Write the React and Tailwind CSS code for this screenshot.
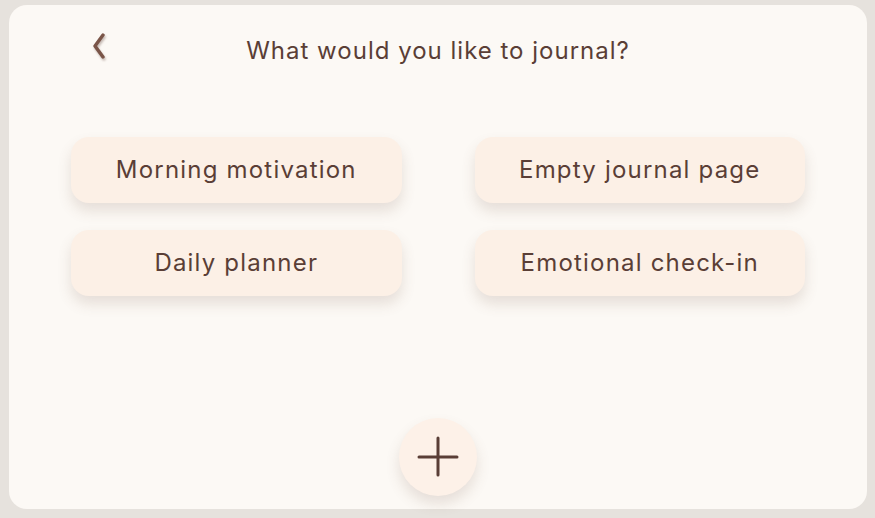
import React from 'react';

const options = ['Morning motivation', 'Empty journal page', 'Daily planner', 'Emotional check-in'];

const App = () => {
  return (
    <div className="w-[875px] h-[518px] bg-[#e6e2dd] pt-[5px] pl-[9px] pr-[8px] pb-[9px]" style={{ fontFamily: 'Inter, "Noto Sans", sans-serif' }}>
      <div className="h-full bg-[#fcf9f5] rounded-[18px] flex flex-col">
        {/* Header */}
        <div className="relative h-[90px] flex items-start justify-center pt-[28px]">
          <button className="absolute left-[80px] top-[25px] text-[#7a5548] drop-shadow-[1px_2px_1px_rgba(90,60,50,0.35)]">
            <svg width="20" height="32" viewBox="0 0 20 32" fill="none">
              <path d="M14 5 L6 16 L14 27" stroke="currentColor" strokeWidth="3.4" strokeLinecap="round" strokeLinejoin="round" />
            </svg>
          </button>
          <h1 className="text-[24px] leading-[36px] text-[#5a3e36] tracking-[1px]">What would you like to journal?</h1>
        </div>

        {/* Options */}
        <div className="grid grid-cols-2 gap-x-[73px] gap-y-[27px] px-[62px] pt-[42px]">
          {options.map(o => (
            <button
              key={o}
              className="h-[66px] rounded-[18px] bg-[#fcf0e6] text-[24px] tracking-[1.2px] text-[#5a3e36] shadow-[0_8px_14px_rgba(120,90,70,0.16)]"
            >
              {o}
            </button>
          ))}
        </div>

        {/* Add button */}
        <div className="flex-1 flex items-end justify-center pb-[13px]">
          <button className="w-[78px] h-[78px] rounded-full bg-[#fdf1e8] flex items-center justify-center text-[#5a3e36] shadow-[0_8px_14px_rgba(120,90,70,0.16)]">
            <svg width="42" height="42" viewBox="0 0 42 42" fill="none">
              <path d="M21 2 V39 M2 21 H40" stroke="currentColor" strokeWidth="3" strokeLinecap="round" />
            </svg>
          </button>
        </div>
      </div>
    </div>
  );
};

export default App;
